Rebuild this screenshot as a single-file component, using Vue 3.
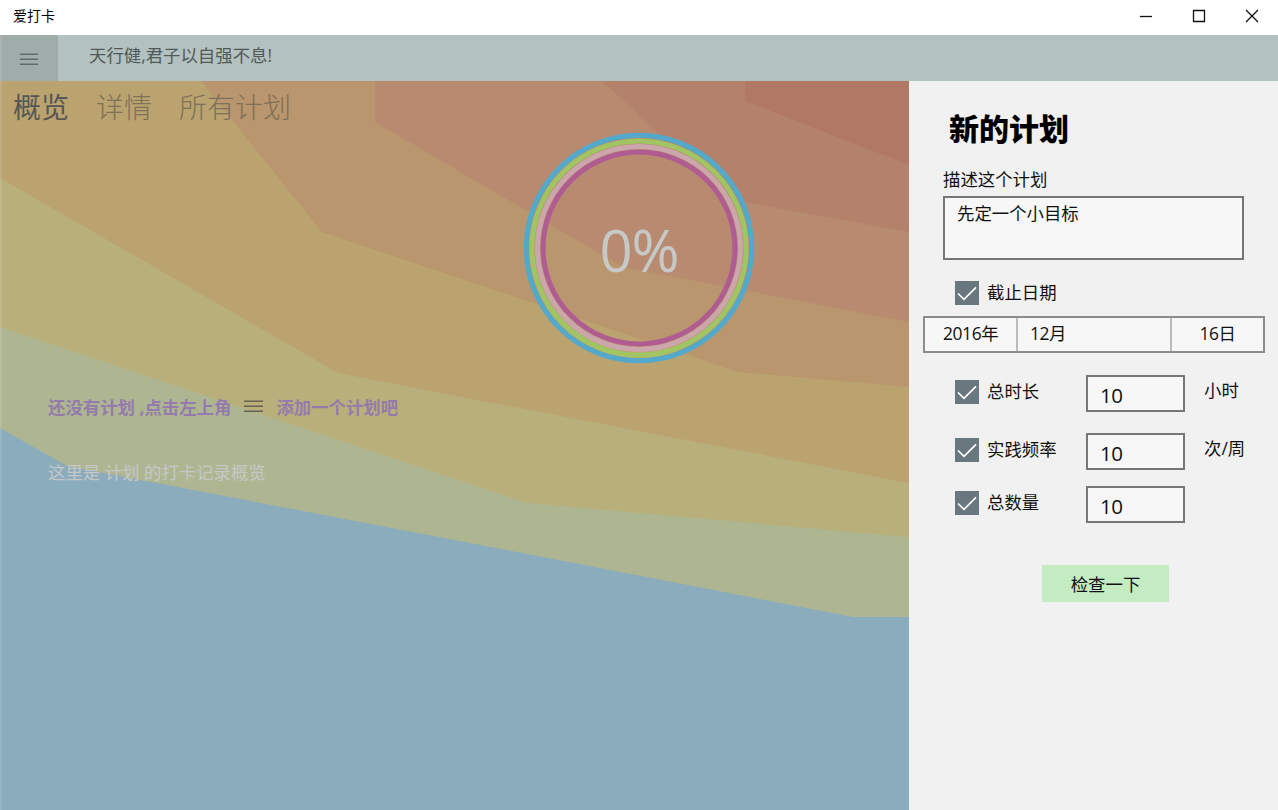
<script setup>
import { ref } from 'vue'

const tabs = ['概览', '详情', '所有计划']
const activeTab = ref(0)

// 背景色带, 从外到内
const bands = [
  { color: '#aeb691', points: '0,81 0,428 67,466 460,541 853,617 909,617 909,81' },
  { color: '#b9af7b', points: '0,81 0,327 527,503 909,537 909,81' },
  { color: '#baa36f', points: '0,81 0,178 338,373 909,483 909,81' },
  { color: '#b9966d', points: '201,81 322,232 738,372 909,387 909,81' },
  { color: '#b88b70', points: '375,81 375,122 623,267 909,322 909,81' },
  { color: '#b4826b', points: '602,81 732,200 909,232 909,81' },
  { color: '#b17965', points: '745,81 745,101 909,165 909,81' }
]

const rings = [
  { color: '#52a9cb', r: 112.8 },
  { color: '#a2c563', r: 107.1 },
  { color: '#cba6ab', r: 101.5 },
  { color: '#b05c92', r: 95.9 }
]

const description = ref('先定一个小目标')
const hasDeadline = ref(true)
const items = ref([
  { key: 'time', label: '总时长', value: '10', unit: '小时', checked: true },
  { key: 'rate', label: '实践频率', value: '10', unit: '次/周', checked: true },
  { key: 'count', label: '总数量', value: '10', unit: '', checked: true }
])
</script>

<template>
  <div class="window">
    <header class="title-bar">
      <span class="app-name">爱打卡</span>
      <div class="window-btns">
        <svg width="14" height="14" viewBox="0 0 14 14"><path d="M1 7.5H13" /></svg>
        <svg width="14" height="14" viewBox="0 0 14 14"><path d="M1.5 1.5H12.5V12.5H1.5Z" /></svg>
        <svg width="14" height="14" viewBox="0 0 14 14"><path d="M1 1L13 13M13 1L1 13" /></svg>
      </div>
    </header>

    <div class="top-bar">
      <button class="menu-btn">
        <svg width="18" height="12" viewBox="0 0 18 12"><path d="M0 1.2H18M0 6.2H18M0 11.2H18" /></svg>
      </button>
      <span class="motto">天行健,君子以自强不息!</span>
    </div>

    <div class="body">
      <main class="overview">
        <svg class="backdrop" viewBox="0 81 909 729" preserveAspectRatio="none">
          <polygon v-for="band in bands" :key="band.color" :fill="band.color" :points="band.points" />
        </svg>
        <nav class="tabs">
          <span
            v-for="(tab, i) in tabs"
            :key="tab"
            class="tab"
            :class="{ active: i === activeTab }"
            @click="activeTab = i"
          >{{ tab }}</span>
        </nav>
        <div class="progress">
          <svg class="rings" width="232" height="232" viewBox="-116 -116 232 232">
            <circle v-for="ring in rings" :key="ring.r" :r="ring.r" :stroke="ring.color" />
          </svg>
          <span class="percent">0%</span>
        </div>
        <p class="empty-tip">
          <span>还没有计划 ,点击左上角</span>
          <svg width="19" height="12" viewBox="0 0 19 12"><path d="M0 1.3H19M0 6.3H19M0 11.2H19" /></svg>
          <span>添加一个计划吧</span>
        </p>
        <p class="record-tip">这里是 计划 的打卡记录概览</p>
      </main>

      <aside class="plan-panel">
        <h1>新的计划</h1>
        <label class="desc-label">描述这个计划</label>
        <div class="desc-box">{{ description }}</div>

        <div class="check deadline" @click="hasDeadline = !hasDeadline">
          <span class="box">
            <svg v-if="hasDeadline" width="24" height="24" viewBox="0 0 24 24"><path d="M3 12.5L9 18.3L21 6.3" /></svg>
          </span>
          <span class="text">截止日期</span>
        </div>
        <div class="date-picker">
          <span class="year">2016年</span>
          <span class="month">12月</span>
          <span class="day">16日</span>
        </div>

        <div v-for="item in items" :key="item.key" class="row" :class="item.key">
          <div class="check" @click="item.checked = !item.checked">
            <span class="box">
              <svg v-if="item.checked" width="24" height="24" viewBox="0 0 24 24"><path d="M3 12.5L9 18.3L21 6.3" /></svg>
            </span>
            <span class="text">{{ item.label }}</span>
          </div>
          <div class="num">{{ item.value }}</div>
          <span class="unit">{{ item.unit }}</span>
        </div>

        <button class="submit">检查一下</button>
      </aside>
    </div>
  </div>
</template>

<style>
body {
  margin: 0;
  overflow: hidden;
}
</style>

<style scoped>
.window {
  width: 1278px;
  height: 810px;
  display: flex;
  flex-direction: column;
  background: #f1f1f1;
  color: #111;
  font-family: 'Open Sans', 'Noto Sans CJK SC', sans-serif;
  font-size: 17.4px;
  line-height: 24px;
}

svg {
  display: block;
  fill: none;
}

.title-bar {
  height: 35px;
  flex: none;
  box-sizing: border-box;
  display: flex;
  align-items: center;
  justify-content: space-between;
  padding: 0 19px 3px 13px;
  background: #fff;
}

.app-name {
  font-size: 14px;
  color: #000;
}

.window-btns {
  display: flex;
  gap: 39px;
  stroke: #111;
  stroke-width: 1.3;
}

.top-bar {
  height: 46px;
  flex: none;
  display: flex;
  background: #b3c2c1;
}

.menu-btn {
  width: 58px;
  height: 46px;
  border: none;
  border-left: 2px solid #a9b4b2;
  box-sizing: border-box;
  padding: 2px 2px 0 0;
  display: flex;
  align-items: center;
  justify-content: center;
  background: #a0acaa;
  stroke: #626a69;
  stroke-width: 1.5;
}

.motto {
  margin: 8px 0 0 31px;
  color: #515857;
}

.body {
  flex: 1;
  display: flex;
}

.overview {
  position: relative;
  width: 909px;
  height: 729px;
  background: #8bacbd;
}

.overview::before {
  content: '';
  position: absolute;
  z-index: 1;
  left: 0;
  top: 0;
  width: 2px;
  height: 100%;
  background: rgba(255, 255, 255, 0.1);
}

.backdrop {
  position: absolute;
  left: 0;
  top: 0;
  width: 100%;
  height: 100%;
}

.tabs,
.empty-tip,
.record-tip {
  position: relative;
  display: flex;
}

.tabs {
  height: 51px;
  box-sizing: border-box;
  padding: 6px 0 0 13px;
  gap: 27px;
  font-size: 28px;
  line-height: 40px;
  font-weight: 300;
}

.tab {
  color: #7f7059;
}

.tab.active {
  color: #575655;
  font-weight: 400;
}

.progress {
  position: relative;
  width: 232px;
  height: 232px;
  margin-left: 523px;
  display: grid;
  place-items: center;
}

.rings {
  grid-area: 1 / 1;
}

.rings circle {
  stroke-width: 5;
}

.percent {
  grid-area: 1 / 1;
  padding-top: 4px;
  font-size: 58px;
  line-height: 64px;
  letter-spacing: -1px;
  color: #c7c8c8;
}

.empty-tip {
  margin: 31px 0 0 48px;
  align-items: center;
  font-weight: 700;
  color: #957bad;
}

.empty-tip svg {
  margin: 0 13px 2px 13px;
  stroke: #666355;
  stroke-width: 1.4;
}

.record-tip {
  margin: 41px 0 0 48px;
  color: #c6c8c7;
}

.plan-panel {
  width: 369px;
  box-sizing: border-box;
  display: flex;
  flex-direction: column;
  align-items: flex-start;
}

h1 {
  margin: 26px 0 0 40px;
  font-size: 30px;
  line-height: 44px;
  font-weight: 900;
  color: #000;
}

.desc-label {
  margin: 16px 0 0 34px;
}

.desc-box {
  width: 301px;
  height: 64px;
  box-sizing: border-box;
  margin: 5px 0 0 34px;
  padding: 3px 12px;
  border: 2px solid #767676;
  background: #f7f7f7;
}

.check {
  width: 131px;
  height: 24px;
  display: flex;
  gap: 8px;
  white-space: nowrap;
}

.deadline {
  margin: 21px 0 0 46px;
}

.box {
  width: 24px;
  height: 24px;
  background: #68787e;
  stroke: #fff;
  stroke-width: 1.7;
}

.check .text {
  margin-top: -1px;
}

.date-picker {
  width: 342px;
  height: 37px;
  box-sizing: border-box;
  margin: 11px 0 0 14px;
  border: 2px solid #8c8c8c;
  display: flex;
  background: #f7f7f7;
  line-height: 31px;
  letter-spacing: -0.4px;
}

.date-picker span {
  box-sizing: border-box;
}

.year {
  width: 91px;
  padding-left: 18px;
}

.month {
  width: 156px;
  padding-left: 12px;
  border: solid #bcbcbc;
  border-width: 0 2px;
}

.day {
  flex: 1;
  text-align: center;
}

.row {
  display: flex;
  align-items: flex-start;
  margin-left: 46px;
}

.row .check {
  margin-top: 5px;
}

.row.time {
  margin-top: 22px;
}

.row.rate {
  margin-top: 21px;
}

.row.count {
  margin-top: 16px;
}

.num {
  width: 99px;
  height: 37px;
  box-sizing: border-box;
  padding: 2px 12px 0;
  border: 2px solid #767676;
  background: #f7f7f7;
  font-size: 20.5px;
  line-height: 32px;
  letter-spacing: -0.5px;
}

.unit {
  margin: 3px 0 0 19px;
}

.submit {
  width: 127px;
  height: 37px;
  margin: 42px 0 0 133px;
  padding: 0;
  border: none;
  background: #c4ecc3;
  font: inherit;
  color: #111;
}
</style>
